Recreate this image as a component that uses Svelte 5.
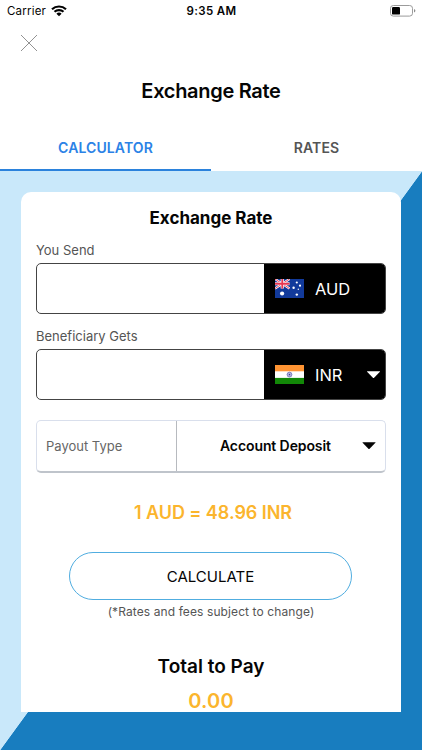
<script lang="ts">
  type Tab = 'calculator' | 'rates';

  let activeTab = $state<Tab>('calculator');
  let sendAmount = $state('');
  let receiveAmount = $state('');

  const tabs: { id: Tab; label: string }[] = [
    { id: 'calculator', label: 'CALCULATOR' },
    { id: 'rates', label: 'RATES' },
  ];
</script>

{#snippet caret()}
  <svg class="caret" viewBox="0 0 14 8" aria-hidden="true">
    <path d="M0.6 0.2h12.8q.4 0 0 .5L7.6 6.8q-.6.5-1.2 0L.6.7z" fill="currentColor" />
  </svg>
{/snippet}

<div class="screen">
  <div class="status-bar">
    <div class="carrier">
      <span>Carrier</span>
      <svg class="wifi" viewBox="0 0 16 12" aria-hidden="true">
        <path d="M1 4.3a10.2 10.2 0 0 1 14 0" />
        <path d="M3.5 6.8a6.6 6.6 0 0 1 9 0" />
        <path class="dot" d="M5.4 8.7a3.8 3.8 0 0 1 5.2 0L8 11.2z" />
      </svg>
    </div>
    <span class="time">9:35 AM</span>
    <svg class="battery" viewBox="0 0 26 12" aria-hidden="true">
      <rect x="0.5" y="0.5" width="22" height="10.6" rx="2.8" fill="none" stroke="#9b9b9b" />
      <rect x="2" y="2" width="8" height="7.6" rx="1.2" />
      <path d="M24 4q1.4.6 1.4 1.8T24 7.6z" fill="#8d8d8d" />
    </svg>
  </div>

  <div class="nav">
    <button type="button" class="close" aria-label="Close">
      <svg viewBox="0 0 18 18"><path d="M1 1l16 16M17 1L1 17" /></svg>
    </button>
  </div>

  <h1>Exchange Rate</h1>

  <div class="tabs" role="tablist">
    {#each tabs as tab}
      <button
        type="button"
        role="tab"
        class="tab"
        class:active={tab.id === activeTab}
        aria-selected={tab.id === activeTab}
        onclick={() => (activeTab = tab.id)}
      >
        {tab.label}
      </button>
    {/each}
  </div>

  <main>
    <section class="card">
      <h2>Exchange Rate</h2>

      <label for="send">You Send</label>
      <div class="amount">
        <input id="send" inputmode="decimal" bind:value={sendAmount} />
        <div class="currency">
          <svg class="flag" viewBox="0 0 29 19" aria-hidden="true">
            <rect width="29" height="19" fill="#123a9b" />
            <path d="M0 0l14.5 9.5M14.5 0L0 9.5" stroke="#fff" stroke-width="2.2" />
            <path d="M0 0l14.5 9.5M14.5 0L0 9.5" stroke="#e8364f" stroke-width="0.9" />
            <path d="M7.25 0v9.5M0 4.75h14.5" stroke="#fff" stroke-width="3.2" />
            <path d="M7.25 0v9.5M0 4.75h14.5" stroke="#e8364f" stroke-width="1.8" />
            <g fill="#fff">
              <circle cx="7.1" cy="14.5" r="2.1" />
              <circle cx="21.8" cy="3.5" r="1.1" />
              <circle cx="18.6" cy="8.7" r="1.2" />
              <circle cx="25" cy="6.7" r="1.1" />
              <circle cx="23.3" cy="10.2" r="0.7" />
              <circle cx="21.8" cy="15.6" r="1.2" />
            </g>
          </svg>
          <span>AUD</span>
        </div>
      </div>

      <label for="receive">Beneficiary Gets</label>
      <div class="amount">
        <input id="receive" inputmode="decimal" bind:value={receiveAmount} />
        <div class="currency">
          <svg class="flag" viewBox="0 0 29 19" aria-hidden="true">
            <rect width="29" height="19" fill="#fff" />
            <rect width="29" height="6.3" fill="#ff9433" />
            <rect y="12.9" width="29" height="6.1" fill="#128807" />
            <circle cx="14.5" cy="9.6" r="2.4" fill="#d3d3ee" stroke="#5c5cab" stroke-width="0.7" />
            <path d="M12.1 9.6h4.8M14.5 7.2v4.8M12.8 7.9l3.4 3.4M16.2 7.9l-3.4 3.4" stroke="#7272b8" stroke-width="0.4" />
            <circle cx="14.5" cy="9.6" r="0.7" fill="#34348f" />
          </svg>
          <span>INR</span>
          {@render caret()}
        </div>
      </div>

      <div class="payout">
        <span class="payout-label">Payout Type</span>
        <button type="button" class="payout-value">
          <span>Account Deposit</span>
          {@render caret()}
        </button>
      </div>

      <p class="rate">1 AUD = 48.96 INR</p>
      <button type="button" class="calculate">CALCULATE</button>
      <p class="note">(*Rates and fees subject to change)</p>

      <h3>Total to Pay</h3>
      <p class="total">0.00</p>
    </section>
  </main>
</div>

<style>
  :global(body) {
    background: #fff;
  }

  .screen {
    display: flex;
    flex-direction: column;
    width: 422px;
    height: 750px;
    overflow: hidden;
    background: #fff;
    color: #050505;
    font-family: Inter, 'Liberation Sans', sans-serif;
  }

  .screen * {
    box-sizing: border-box;
  }

  h1, h2, h3, p {
    margin: 0;
    text-align: center;
    white-space: nowrap;
  }

  button, input {
    padding: 0;
    border: 0;
    background: none;
    color: inherit;
    font: inherit;
  }

  .status-bar {
    display: grid;
    grid-template-columns: 1fr auto 1fr;
    align-items: center;
    height: 22px;
    padding: 0 6px 0 7px;
    font-size: 11.5px;
    line-height: 22px;
  }

  .carrier {
    display: flex;
    align-items: center;
    gap: 5px;
    letter-spacing: 0.2px;
  }

  .wifi {
    width: 16px;
    height: 12px;
    fill: none;
    stroke: #000;
    stroke-width: 2.2;
  }

  .wifi .dot {
    fill: #000;
    stroke: none;
  }

  .time {
    font-weight: 600;
    letter-spacing: 0.35px;
  }

  .battery {
    justify-self: end;
    width: 26px;
    height: 12px;
  }

  .nav {
    height: 43px;
    padding: 12px 20px;
  }

  .close {
    display: block;
    width: 18px;
    height: 18px;
  }

  .close svg {
    display: block;
    fill: none;
    stroke: #929292;
    stroke-width: 1;
  }

  h1 {
    height: 60px;
    padding-top: 13px;
    font-size: 20px;
    font-weight: 600;
    letter-spacing: -0.3px;
    line-height: 26px;
  }

  .tabs {
    display: flex;
    height: 46px;
  }

  .tab {
    flex: 1;
    border-bottom: 2px solid transparent;
    color: #555;
    font-size: 14px;
    font-weight: 600;
    letter-spacing: 0.1px;
  }

  .tab.active {
    border-color: #2b82dc;
    color: #2b82e6;
  }

  main {
    flex: 1;
    min-height: 0;
    padding: 21px 21px 38px;
    background: linear-gradient(to bottom right, #c9e8fa 50%, #187dbf 50.1%);
  }

  .card {
    display: flex;
    flex-direction: column;
    height: 520px;
    padding: 14px 15px 0;
    overflow: hidden;
    border-radius: 10px 10px 0 0;
    background: #fff;
  }

  .card > * {
    flex-shrink: 0;
  }

  h2 {
    font-size: 17px;
    font-weight: 700;
    line-height: 24px;
  }

  label {
    height: 33px;
    padding-top: 10px;
    color: #555;
    font-size: 13px;
    line-height: 20px;
  }

  .amount {
    display: flex;
    height: 51px;
    margin-bottom: 2px;
    overflow: hidden;
    border: 1px solid #444;
    border-radius: 5px;
  }

  .amount input {
    flex: 1;
    min-width: 0;
    padding: 0 10px;
    outline: none;
  }

  .currency {
    display: flex;
    align-items: center;
    width: 121px;
    padding: 0 4px 0 11px;
    background: #000;
    color: #fff;
    font-size: 16.5px;
  }

  .flag {
    width: 29px;
    height: 19px;
    margin-right: 11px;
  }

  .caret {
    width: 14px;
    height: 8px;
    margin-left: auto;
  }

  .currency .caret {
    width: 15px;
  }

  .payout {
    display: flex;
    height: 53px;
    margin-top: 18px;
    border: 1px solid #d9dfec;
    border-bottom: 2px solid #bfc4cb;
    border-radius: 5px;
  }

  .payout-label {
    width: 140px;
    padding-left: 9px;
    border-right: 1px solid #b7babf;
    color: #666;
    font-size: 13px;
    line-height: 50px;
  }

  .payout-value {
    display: flex;
    flex: 1;
    align-items: center;
    padding: 0 9px 1px 43px;
    font-size: 14px;
    font-weight: 600;
    letter-spacing: -0.1px;
  }

  .rate {
    margin-top: 27px;
    padding-left: 4px;
    color: #fbb52d;
    font-size: 18px;
    font-weight: 600;
    letter-spacing: -0.05px;
    line-height: 26px;
  }

  .calculate {
    align-self: center;
    width: 283px;
    height: 48px;
    margin-top: 26px;
    margin-right: 1px;
    border: 1px solid #50ade0;
    border-radius: 24px;
    font-size: 15px;
  }

  .note {
    margin-top: 2px;
    color: #555;
    font-size: 12px;
    letter-spacing: 0.1px;
    line-height: 20px;
  }

  h3 {
    margin-top: 32px;
    font-size: 19px;
    font-weight: 600;
    line-height: 26px;
  }

  .total {
    margin-top: 8px;
    color: #fbb52d;
    font-size: 20px;
    font-weight: 600;
    letter-spacing: 0.2px;
    line-height: 26px;
  }
</style>
